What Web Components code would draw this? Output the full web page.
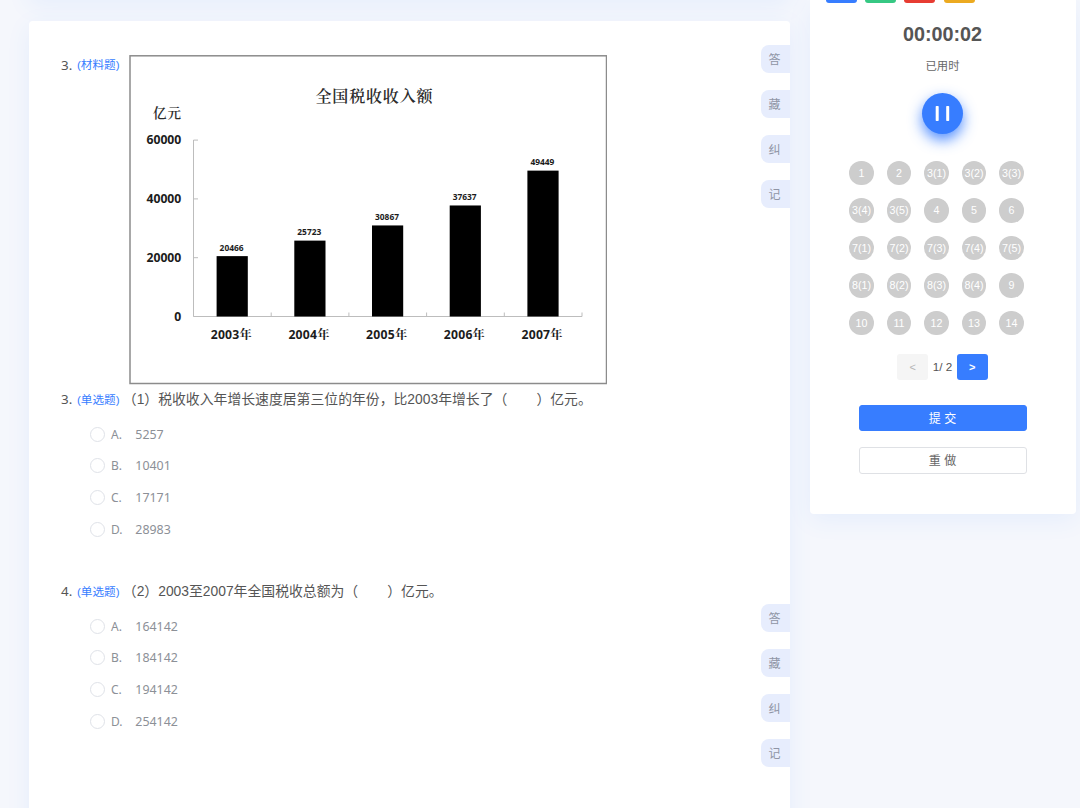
<!DOCTYPE html>
<html lang="zh-CN">
  <head>
    <meta charset="utf-8" />
    <title>练习</title>
    <style>
      body {
        margin: 0;
        height: 808px;
        overflow: hidden;
        background: #f5f7fc;
        color: #555;
        font-family: "Liberation Sans", "Noto Sans CJK SC", sans-serif;
        font-size: 13.85px;
      }
    </style>
  </head>

  <body>
    <exam-page>
      <question-group>
        <question-item number="3" kind="材料题" class="material">
          <tax-chart></tax-chart>
        </question-item>
        <question-item number="3" kind="单选题" options="5257,10401,17171,28983">
          （1）税收收入年增长速度居第三位的年份，比2003年增长了（<answer-blank></answer-blank>）亿元。
        </question-item>
      </question-group>
      <question-group>
        <question-item number="4" kind="单选题" options="164142,184142,194142,254142">
          （2）2003至2007年全国税收总额为（<answer-blank></answer-blank>）亿元。
        </question-item>
      </question-group>
      <answer-panel slot="side" time="00:00:02"></answer-panel>
    </exam-page>

    <template id="exam-page">
      <style>
        :host {
          display: flex;
          align-items: flex-start;
          gap: 20px;
          height: 808px;
          padding-left: 28.5px;
          overflow: hidden;
        }
        .main {
          width: 761px;
          display: flex;
          flex-direction: column;
          gap: 20px;
          flex: none;
        }
        .previous,
        .card {
          background: #fff;
          border-radius: 4px;
          box-shadow: 0 6px 24px rgba(55, 125, 255, 0.08);
        }
        .previous {
          height: 30px;
          margin-top: -31px;
        }
        .card {
          height: 820px;
          margin-top: 2px;
        }
      </style>
      <div class="main">
        <div class="previous"></div>
        <div class="card"><slot></slot></div>
      </div>
      <slot name="side"></slot>
    </template>

    <template id="question-group">
      <style>
        :host {
          display: flex;
          justify-content: space-between;
          height: 559px;
          box-sizing: border-box;
          padding: 24px 0 0 32.5px;
        }
        .tools {
          display: flex;
          flex-direction: column;
          gap: 17px;
        }
        .tools span {
          width: 29px;
          height: 28px;
          line-height: 30px;
          text-align: center;
          font-size: 12px;
          color: #8f95a5;
          background: #e7edfd;
          border-radius: 8px 0 0 8px;
          text-indent: -1px;
        }
      </style>
      <div><slot></slot></div>
      <div class="tools">
        <span>答</span><span>藏</span><span>纠</span><span>记</span>
      </div>
    </template>

    <template id="question-item">
      <style>
        :host {
          display: block;
          margin-top: -27.5px;
          padding-bottom: 20px;
        }
        :host(.material) {
          margin-top: 10px;
          padding: 0 0 26px;
        }
        .title {
          display: flex;
          height: 30px;
          line-height: 29px;
          white-space: nowrap;
        }
        :host(.material) .title {
          height: 331px;
          line-height: 20px;
        }
        .number {
          width: 16px;
          font-family: "Noto Sans", sans-serif;
          font-size: 13.4px;
        }
        .kind {
          width: 45.8px;
          color: #377dff;
          font-size: 11.6px;
        }
        :host(.material) .kind {
          width: 52px;
        }
        .options {
          display: flex;
          flex-direction: column;
          gap: 11.8px;
          padding: 10px 0 0 28.5px;
        }
        .options:empty {
          display: none;
        }
        label {
          display: flex;
          align-items: center;
          height: 20px;
          font: 12.4px/20px "Noto Sans", sans-serif;
          color: #8c9097;
        }
        i {
          width: 13px;
          height: 13px;
          border: 1px solid #dfe2e8;
          border-radius: 50%;
          margin: -1px 6.5px 0 0;
        }
        b {
          width: 24.3px;
          font-weight: normal;
          font-size: 12px;
        }
      </style>
      <div class="title">
        <span class="number"></span>
        <span class="kind"></span>
        <span><slot></slot></span>
      </div>
      <div class="options"></div>
    </template>

    <template id="tax-chart">
      <style>
        :host {
          display: block;
        }
        svg {
          display: block;
        }
        text {
          font-family: "Open Sans", "Noto Serif CJK SC", "Noto Sans CJK SC", sans-serif;
          font-weight: bold;
          font-size: 12.2px;
          fill: #1c1c1c;
        }
        .serif {
          font-family: "Noto Serif CJK SC", "Noto Sans CJK SC", serif;
          font-weight: 600;
          fill: #2c2c2c;
        }
        .value {
          font-size: 8.4px;
        }
      </style>
      <svg width="478" height="330" viewBox="129 55 478 330">
        <rect x="130" y="55.8" width="476.5" height="327.7" fill="#fff" stroke="#8c8c8c" stroke-width="1.5" />
        <text class="serif" x="315.5" y="102" style="font-size: 16px" textLength="117">全国税收收入额</text>
        <text class="serif" x="153" y="117.5" style="font-size: 13.5px" textLength="28">亿元</text>
        <g id="plot"></g>
      </svg>
    </template>

    <template id="answer-panel">
      <style>
        :host {
          display: flex;
          flex-direction: column;
          align-items: center;
          width: 266px;
          height: 514px;
          flex: none;
          background: #fff;
          border-radius: 0 0 4px 4px;
          box-shadow: 0 6px 24px rgba(55, 125, 255, 0.08);
          font-size: 12px;
        }
        .tabs {
          align-self: stretch;
          display: flex;
          gap: 8.3px;
          height: 3px;
          padding-left: 16.4px;
        }
        .tabs i {
          width: 31px;
          border-radius: 0 0 4px 4px;
        }
        .time {
          margin-top: 18.5px;
          font-size: 19.8px;
          line-height: 24px;
          font-weight: bold;
        }
        .label {
          margin-top: 10.5px;
          line-height: 20px;
          font-size: 11.3px;
          color: #666;
        }
        .pause {
          display: flex;
          width: 41px;
          height: 41px;
          margin-top: 17px;
          background: #377dff;
          border-radius: 50%;
          box-shadow: 0 6px 14px rgba(55, 125, 255, 0.85);
        }
        .numbers {
          display: grid;
          grid-template-columns: repeat(5, 24.5px);
          gap: 13px;
          margin: 26.5px 12px 0 0;
        }
        .numbers span {
          height: 24.5px;
          line-height: 25px;
          border-radius: 50%;
          background: #cdcdcd;
          color: #fff;
          font-size: 10.7px;
          text-align: center;
        }
        .pager {
          display: flex;
          align-items: center;
          margin-top: 18.5px;
          gap: 4.5px;
          font-size: 11.7px;
        }
        .pager span {
          width: 31px;
          height: 26px;
          line-height: 26px;
          text-align: center;
          border-radius: 3px;
          background: #f5f5f5;
          color: #b5b5b5;
          font-size: 11px;
        }
        .pager .next {
          background: #377dff;
          color: #fff;
          font-weight: bold;
        }
        button {
          width: 168px;
          height: 27px;
          margin: 16px 0 0;
          padding: 0;
          border: 1px solid #dfe1e5;
          border-radius: 3px;
          background: #fff;
          color: #666;
          font: inherit;
          line-height: 26px;
        }
        button.submit {
          height: 26px;
          margin-top: 25px;
          border-color: #377dff;
          background: #377dff;
          color: #fff;
        }
      </style>
      <div class="tabs">
        <i style="background: #377dff"></i>
        <i style="background: #36c883"></i>
        <i style="background: #e73c32"></i>
        <i style="background: #ecaa20"></i>
      </div>
      <div class="time"></div>
      <div class="label">已用时</div>
      <div class="pause">
        <svg width="41" height="41" viewBox="0 0 41 41" fill="#fff">
          <rect x="13.7" y="13" width="3" height="15" rx="0.7" />
          <rect x="24.2" y="13" width="3" height="15" rx="0.7" />
        </svg>
      </div>
      <div class="numbers"></div>
      <div class="pager"><span>&lt;</span>1/ 2<span class="next">&gt;</span></div>
      <button class="submit">提 交</button>
      <button>重 做</button>
    </template>

    <script>
      class BaseElement extends HTMLElement {
        constructor() {
          super();
          this.attachShadow({ mode: "open" });
          const template = document.getElementById(this.localName);
          this.shadowRoot.appendChild(template.content.cloneNode(true));
        }
      }

      class ExamPage extends BaseElement {}
      class QuestionGroup extends BaseElement {}

      class QuestionItem extends BaseElement {
        connectedCallback() {
          const root = this.shadowRoot;
          root.querySelector(".number").textContent = this.getAttribute("number") + ".";
          root.querySelector(".kind").textContent = "(" + this.getAttribute("kind") + ")";
          const options = this.getAttribute("options");
          if (options) {
            root.querySelector(".options").innerHTML = options
              .split(",")
              .map((text, i) => `<label><i></i><b>${"ABCD"[i]}.</b>${text}</label>`)
              .join("");
          }
        }
      }

      // the gap between the brackets of a question
      class AnswerBlank extends HTMLElement {
        constructor() {
          super();
          this.attachShadow({ mode: "open" });
          this.shadowRoot.innerHTML = "<style>:host { display: inline-block; width: 29px; }</style>";
        }
      }

      class TaxChart extends BaseElement {
        connectedCallback() {
          const bottom = 316.5;
          const left = 193.5;
          const step = 77.7;
          let out = `<path d="M${left} 140V${bottom}H582" fill="none" stroke="#bdbdbd" />`;

          [0, 20000, 40000, 60000].forEach((value) => {
            const y = bottom - (value / 20000) * 58.8;
            out += `<path d="M${left} ${y}h4.5" stroke="#bdbdbd" />`;
            out += `<text x="181.3" y="${y + 4}" text-anchor="end">${value}</text>`;
          });

          [20466, 25723, 30867, 37637, 49449].forEach((value, i) => {
            const x = 232.2 + i * step;
            const height = value * 0.00295;
            out += `<path d="M${left + (i + 1) * step} ${bottom}v-4" stroke="#bdbdbd" />`;
            out += `<rect x="${x - 15.6}" y="${bottom - height}" width="31.2" height="${height}" fill="#000" />`;
            out += `<text class="value" x="${x - 0.6}" y="${bottom - height - 5.5}" text-anchor="middle">${value}</text>`;
            out += `<text x="${x - 1}" y="338.5" text-anchor="middle" textLength="41">${2003 + i}年</text>`;
          });
          this.shadowRoot.getElementById("plot").innerHTML = out;
        }
      }

      class AnswerPanel extends BaseElement {
        connectedCallback() {
          const numbers = "1 2 3(1) 3(2) 3(3) 3(4) 3(5) 4 5 6 7(1) 7(2) 7(3) 7(4) 7(5) 8(1) 8(2) 8(3) 8(4) 9 10 11 12 13 14";
          this.shadowRoot.querySelector(".time").textContent = this.getAttribute("time");
          this.shadowRoot.querySelector(".numbers").innerHTML = numbers
            .split(" ")
            .map((n) => `<span>${n}</span>`)
            .join("");
        }
      }

      customElements.define("exam-page", ExamPage);
      customElements.define("question-group", QuestionGroup);
      customElements.define("question-item", QuestionItem);
      customElements.define("answer-blank", AnswerBlank);
      customElements.define("tax-chart", TaxChart);
      customElements.define("answer-panel", AnswerPanel);
    </script>
  </body>
</html>
